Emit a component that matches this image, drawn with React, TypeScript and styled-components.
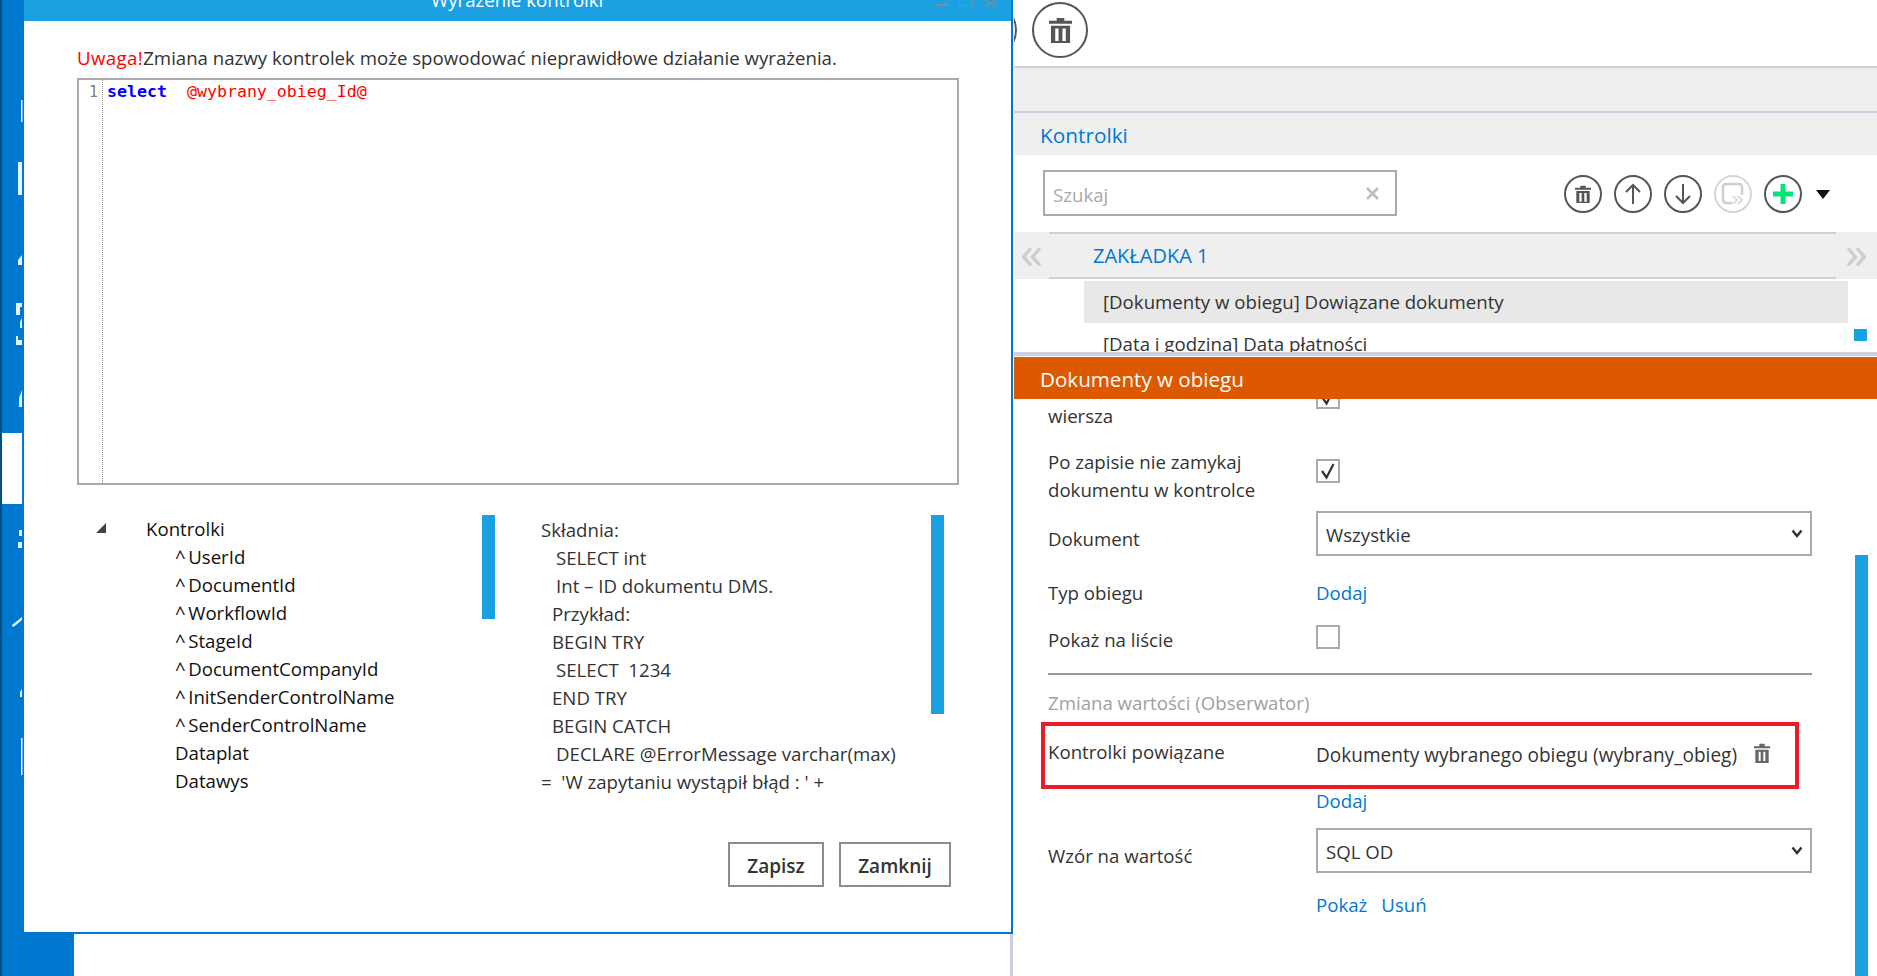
import React from "react";
import styled, { createGlobalStyle } from "styled-components";

const Global = createGlobalStyle`
  html, body { margin: 0; padding: 0; background: #fff; overflow: hidden; }
  * { box-sizing: border-box; }
  body { font-family: "Open Sans", "Noto Sans", sans-serif; font-size: 18.65px; color: #333; }
`;

const Page = styled.div`
  width: 1877px; height: 976px; display: flex; overflow: hidden; background: #fff;
`;
const LeftColumn = styled.div`
  width: 1013px; height: 976px; flex: none; display: flex; flex-direction: column;
  border-left: 2px solid #004f85;
`;
const WorkRow = styled.div`
  display: flex; height: 934px; flex: none;
`;
const Rail = styled.div`
  width: 22px; flex: none; background: #0078cf; display: flex; flex-direction: column;
`;
const RailGlyphs = styled.svg`
  display: block; width: 22px; flex: none;
`;
const RailSelected = styled.div`
  width: 20px; height: 71px; flex: none; background: #fff;
`;
const BottomRow = styled.div`
  display: flex; flex: 1; border-right: 3px solid #cdcfdc;
`;
const BottomBlue = styled.div`
  width: 72px; background: #0078cf;
`;
const Modal = styled.section`
  flex: 1; display: flex; flex-direction: column; background: #fff;
  border-right: 2px solid #0078cf; border-bottom: 2px solid #0078cf;
`;
const TitleBar = styled.header`
  height: 21px; flex: none; background: #1ba1e2; overflow: hidden; display: flex;
  justify-content: space-between; align-items: flex-start; color: #fff;
`;
const Title = styled.div`
  margin: -12px 0 0 407px; line-height: 24px;
`;
const WindowControls = styled.svg`
  width: 78px; height: 10px; display: block; flex: none;
`;
const ModalBody = styled.div`
  padding: 23px 0 0 53px; display: flex; flex-direction: column; flex: 1;
`;
const Warning = styled.div`
  height: 28px; line-height: 28px; margin-bottom: 6px; color: #333;
`;
const Red = styled.span`color: #f00; letter-spacing: 0.4px;`;
const Editor = styled.div`
  width: 882px; height: 407px; flex: none; border: 2px solid #a9a9b0; display: flex; padding-top: 2px;
  font-family: "DejaVu Sans Mono", "Liberation Mono", monospace; font-size: 16.6px; line-height: 20px;
`;
const Gutter = styled.div`
  width: 24px; flex: none; text-align: right; color: #808080; padding-right: 4px; margin-top: -2px; padding-top: 2px;
  border-right: 1px dotted #999; font-weight: 400; font-size: 15px;
`;
const Code = styled.div`
  padding-left: 4px; white-space: pre;
`;
const Keyword = styled.span`color: #00f; font-weight: 700;`;
const Variable = styled.span`color: #f00;`;
const Panes = styled.div`
  display: flex; margin-top: 30px; height: 300px; flex: none;
`;
const TreePane = styled.div`
  width: 418px; flex: none; display: flex; padding-left: 19px;
`;
const TreeArrow = styled.svg`
  width: 10px; height: 10px; flex: none; margin-top: 8px; display: block;
`;
const TreeList = styled.div`
  margin-left: 40px; color: #111; display: flex; flex-direction: column;
`;
const TreeRow = styled.div<{ $depth: number }>`
  height: 28px; line-height: 28px; margin-left: ${(p) => p.$depth * 29}px; white-space: pre;
`;
const Caret = styled.span`
  letter-spacing: 2.5px;
`;
const Scroll = styled.div<{ $h: number; $top?: number }>`
  width: 13px; height: ${(p) => p.$h}px; margin-top: ${(p) => p.$top ?? 0}px; flex: none; background: #1ba1e2;
`;
const TreeScroll = styled(Scroll)`
  margin-left: auto;
`;
const SyntaxPane = styled.div`
  display: flex; margin-left: 46px; width: 403px; flex: none; justify-content: space-between;
`;
const SyntaxList = styled.div`
  display: flex; flex-direction: column; padding-top: 1px; color: #333;
`;
const SyntaxRow = styled.div<{ $indent: number }>`
  height: 28px; line-height: 28px; margin-left: ${(p) => p.$indent}px; white-space: pre;
`;
const Actions = styled.div`
  display: flex; gap: 15px; margin-left: 651px; margin-top: 27px;
`;
const ActionButton = styled.button<{ $w: number }>`
  width: ${(p) => p.$w}px; height: 45px; background: #fff; border: 2px solid #8c8c8c; padding: 2px 0 0;
  font-family: inherit; font-size: 19px; font-weight: 600; color: #333;
`;

const RightPanel = styled.div`
  width: 864px; flex: none; height: 976px; display: flex; flex-direction: column; overflow: hidden;
  border-left: 1px solid #fff;
`;
const TopTools = styled.div`
  height: 66px; flex: none; display: flex; padding-top: 2px; gap: 15px;
`;
const RoundTool = styled.div<{ $clipped?: boolean }>`
  width: 56px; height: 56px; border-radius: 50%; border: 2px solid #555; flex: none; display: flex;
  align-items: center; justify-content: center; margin-left: ${(p) => (p.$clipped ? "-53px" : "0")};
`;
const GrayBand = styled.div`
  height: 45px; flex: none; background: #efefef; border-top: 2px solid #cdcfdc;
`;
const HeaderBand = styled.div`
  height: 44px; flex: none; background: #efefef; border-top: 2px solid #cdcfdc; padding-left: 26px;
  color: #0078cf; font-size: 20.8px; line-height: 45px; font-weight: 500;
`;
const Toolbar = styled.div`
  height: 77px; flex: none; padding: 15px 0 0 29px; display: flex; align-items: flex-start;
`;
const SearchBox = styled.div`
  width: 354px; height: 46px; border: 2px solid #a9a9b0; display: flex; align-items: center; padding: 0 16px 0 8px; flex: none;
`;
const SearchInput = styled.input`
  flex: 1; min-width: 0; border: 0; outline: 0; padding: 3px 0 0; font: inherit;
  &::placeholder { color: #a8a8a8; opacity: 1; }
`;
const IconGroup = styled.div`
  display: flex; gap: 12px; margin-left: 167px; margin-top: 5px; align-items: center;
`;
const IconButton = styled.button<{ $disabled?: boolean }>`
  width: 38px; height: 38px; border-radius: 50%; padding: 0; background: #fff; flex: none;
  border: 2px solid ${(p) => (p.$disabled ? "#d6d6d6" : "#555")};
  display: flex; align-items: center; justify-content: center;
`;
const MenuCaret = styled.svg`
  width: 14px; height: 9px; margin-left: 2px; display: block; flex: none;
`;
const TabsBand = styled.div`
  height: 47px; flex: none; background: #efefef; display: flex;
`;
const TabArrow = styled.div<{ $w: number }>`
  width: ${(p) => p.$w}px; flex: none; color: #cdcdcd; font-size: 46px; line-height: 38px; text-align: center; font-weight: 400;
`;
const TabTitle = styled.div`
  width: 787px; flex: none; border-top: 2px solid #cdcfdc; border-bottom: 2px solid #cdcfdc;
  padding-left: 44px; line-height: 44px; color: #0078cf; font-size: 20px; font-weight: 500;
`;
const ListArea = styled.div`
  height: 73px; flex: none; overflow: hidden; display: flex; padding: 2px 0 0 70px;
`;
const ListItems = styled.div`
  width: 764px; flex: none;
`;
const ListItem = styled.div<{ $selected?: boolean }>`
  height: 42px; line-height: 42px; padding-left: 19px; background: ${(p) => (p.$selected ? "#e8e8e8" : "transparent")};
`;
const MiniScroll = styled(Scroll)`
  margin-left: 6px;
`;
const SectionHead = styled.div`
  height: 47px; flex: none; border-top: 4px solid #cdcfdc; padding-top: 1px; background: #fff;
`;
const SectionTitle = styled.div`
  height: 42px; background: #dd5900; color: #fff; padding-left: 26px; line-height: 44px; font-size: 20.6px; font-weight: 500;
`;
const FormArea = styled.div`
  flex: 1; min-height: 0; overflow: hidden; display: flex;
`;
const Form = styled.div`
  width: 841px; flex: none; padding-left: 34px; display: flex; flex-direction: column;
`;
const Row = styled.div<{ $mt?: number; $h?: number }>`
  display: grid; grid-template-columns: 268px 496px; flex: none; margin-top: ${(p) => p.$mt ?? 0}px;
  ${(p) => (p.$h ? `height: ${p.$h}px;` : "")}
`;
const Label = styled.div<{ $mt?: number }>`
  line-height: 28px; margin-top: ${(p) => p.$mt ?? 0}px; color: #333; white-space: nowrap;
`;
const Check = styled.div<{ $mt?: number }>`
  width: 24px; height: 24px; border: 2px solid #a9a9b0; background: #fff; margin-top: ${(p) => p.$mt ?? 0}px;
  display: flex; align-items: center; justify-content: center;
`;
const SelectWrap = styled.div`
  position: relative; width: 496px; height: 45px;
`;
const SelectBox = styled.select`
  appearance: none; width: 496px; height: 45px; border: 2px solid #a9a9b0; border-radius: 0; background: #fff; color: #333;
  font: inherit; padding: 2px 0 0 8px; outline: 0; display: block;
`;
const SelectChevron = styled.svg`
  position: absolute; right: 9px; top: 18px; width: 12px; height: 9px; pointer-events: none;
`;
const LinkText = styled.a`
  color: #0078cf; line-height: 28px; margin-right: 14px; display: inline-block;
`;
const Divider = styled.div`
  width: 764px; height: 2px; background: #999; margin-top: 19px; flex: none;
`;
const SectionLabel = styled.div`
  color: #a0a0a0; line-height: 28px; margin-top: 14px; flex: none;
`;
const Highlight = styled.div`
  width: 758px; height: 67px; flex: none; margin: 5px 0 0 -7px; border: 4px solid #ed1c24; padding-left: 3px;
  display: grid; grid-template-columns: 268px auto 1fr;
`;
const Value = styled.div`
  margin-top: 15px; line-height: 28px; white-space: nowrap; font-size: 19.05px;
`;
const ValueTrash = styled.svg`
  margin: 17px 0 0 17px; width: 16px; height: 20px; display: block;
`;
const FormScroll = styled(Scroll)`
  margin-top: 156px; height: 430px;
`;

const railTop = "M19 100h1.500v22H19zM16 162h4v33h-4zM16 260l4-5v10h-4zM14 303h6v4h-2v8h-4zM18 322l2-4v10h-2zM14 336h2v4h4v5h-6zM17 398l3-8v17h-3z";
const railBottom = "M17 26h3v6h-3zM16 38h4v6h-4zM10 121l10-8v3l-6 5-3 2zM18 188l2-3v8h-2zM19 234h1.500v37H19z";

const TrashIcon = ({ s, color = "#555" }: { s: number; color?: string }) => (
  <svg width={s} height={s * 1.17} viewBox="0 0 24 28">
    <path fill={color} d="M8 1h8v3h8v3H0V4h8zM2 9h20v19H2zM6.500 12v13h3.500V12zM14 12v13h3.500V12z" fillRule="evenodd" />
  </svg>
);

const Checkmark = () => (
  <svg width="16" height="18" viewBox="0 0 16 18"><path d="M2 9l4.500 6.500L13.500 2" stroke="#333" strokeWidth="2.200" fill="none" /></svg>
);

const Chevron = () => (
  <SelectChevron viewBox="0 0 12 9"><path d="M1.500 1.500L6 7l4.500-5.500" stroke="#333" strokeWidth="2.400" fill="none" /></SelectChevron>
);

const treeItems = ["UserId", "DocumentId", "WorkflowId", "StageId", "DocumentCompanyId", "InitSenderControlName", "SenderControlName"];
const syntax: [string, number][] = [
  ["Składnia:", 0], ["SELECT int", 15], ["Int – ID dokumentu DMS.", 15], ["Przykład:", 11], ["BEGIN TRY", 11],
  ["SELECT  1234", 15], ["END TRY", 11], ["BEGIN CATCH", 11], ["DECLARE @ErrorMessage varchar(max)", 15], ["=  'W zapytaniu wystąpił błąd : ' +", 0],
];

export default function App() {
  return (
    <Page>
      <Global />
      <LeftColumn>
        <WorkRow>
          <Rail>
            <RailGlyphs height="433" viewBox="0 0 22 433"><path fill="#e8f3fb" d={railTop} /></RailGlyphs>
            <RailSelected />
            <RailGlyphs height="430" viewBox="0 0 22 430"><path fill="#e8f3fb" d={railBottom} /></RailGlyphs>
          </Rail>
          <Modal>
            <TitleBar>
              <Title>Wyrażenie kontrolki</Title>
              <WindowControls viewBox="0 0 78 10">
                <path d="M3 4h12v2H3z" fill="#7f8c96" />
                <path d="M26.500 0v5.500h13V0" stroke="#7f8c96" fill="none" />
                <path d="M52 0l11 6.500M63 0L52 6.500" stroke="#7f8c96" strokeWidth="1.500" />
              </WindowControls>
            </TitleBar>
            <ModalBody>
              <Warning><Red>Uwaga!</Red>Zmiana nazwy kontrolek może spowodować nieprawidłowe działanie wyrażenia.</Warning>
              <Editor>
                <Gutter>1</Gutter>
                <Code><Keyword>select</Keyword>{"  "}<Variable>@wybrany_obieg_Id@</Variable></Code>
              </Editor>
              <Panes>
                <TreePane>
                  <TreeArrow viewBox="0 0 10 10"><path d="M10 0v10H0z" fill="#444" /></TreeArrow>
                  <TreeList>
                    <TreeRow $depth={0}>Kontrolki</TreeRow>
                    {treeItems.map((t) => <TreeRow key={t} $depth={1}><Caret>^</Caret>{t}</TreeRow>)}
                    <TreeRow $depth={1}>Dataplat</TreeRow>
                    <TreeRow $depth={1}>Datawys</TreeRow>
                  </TreeList>
                  <TreeScroll $h={104} />
                </TreePane>
                <SyntaxPane>
                  <SyntaxList>
                    {syntax.map(([t, i]) => <SyntaxRow key={t} $indent={i}>{t}</SyntaxRow>)}
                  </SyntaxList>
                  <Scroll $h={199} />
                </SyntaxPane>
              </Panes>
              <Actions>
                <ActionButton $w={96}>Zapisz</ActionButton>
                <ActionButton $w={112}>Zamknij</ActionButton>
              </Actions>
            </ModalBody>
          </Modal>
        </WorkRow>
        <BottomRow><BottomBlue /></BottomRow>
      </LeftColumn>
      <RightPanel>
        <TopTools>
          <RoundTool $clipped />
          <RoundTool><TrashIcon s={23} /></RoundTool>
        </TopTools>
        <GrayBand />
        <HeaderBand>Kontrolki</HeaderBand>
        <Toolbar>
          <SearchBox>
            <SearchInput placeholder="Szukaj" />
            <svg width="13" height="13" viewBox="0 0 13 13"><path d="M1 1l11 11M12 1L1 12" stroke="#bdbdbd" strokeWidth="2.500" /></svg>
          </SearchBox>
          <IconGroup>
            <IconButton><TrashIcon s={16} /></IconButton>
            <IconButton>
              <svg width="18" height="22" viewBox="0 0 18 22"><path d="M9 21V2M2 9l7-7 7 7" stroke="#555" strokeWidth="2" fill="none" /></svg>
            </IconButton>
            <IconButton>
              <svg width="18" height="22" viewBox="0 0 18 22"><path d="M9 1v19M2 13l7 7 7-7" stroke="#555" strokeWidth="2" fill="none" /></svg>
            </IconButton>
            <IconButton $disabled>
              <svg width="28" height="26" viewBox="0 0 28 26"><path d="M13 22H7a3 3 0 0 1-3-3V6a3 3 0 0 1 3-3h13a3 3 0 0 1 3 3v8" stroke="#cfcfcf" strokeWidth="2.500" fill="none" /><path d="M14 15l4 4-4 4M19 15l4 4-4 4" stroke="#d0d0d0" strokeWidth="1.500" fill="none" /></svg>
            </IconButton>
            <IconButton>
              <svg width="22" height="22" viewBox="0 0 22 22"><path d="M8.500 1h5v7.500H21v5h-7.500V21h-5v-7.500H1v-5h7.500z" fill="#00e676" /></svg>
            </IconButton>
            <MenuCaret viewBox="0 0 14 9"><path d="M0 0h14L7 9z" fill="#111" /></MenuCaret>
          </IconGroup>
        </Toolbar>
        <TabsBand>
          <TabArrow $w={35}>«</TabArrow>
          <TabTitle>ZAKŁADKA 1</TabTitle>
          <TabArrow $w={41}>»</TabArrow>
        </TabsBand>
        <ListArea>
          <ListItems>
            <ListItem $selected>[Dokumenty w obiegu] Dowiązane dokumenty</ListItem>
            <ListItem>[Data i godzina] Data płatności</ListItem>
          </ListItems>
          <MiniScroll $h={12} $top={48} />
        </ListArea>
        <SectionHead><SectionTitle>Dokumenty w obiegu</SectionTitle></SectionHead>
        <FormArea>
          <Form>
            <Row $h={37}>
              <Label $mt={3}>wiersza</Label>
              <Check $mt={-14}><Checkmark /></Check>
            </Row>
            <Row $mt={12}>
              <Label>Po zapisie nie zamykaj<br />dokumentu w kontrolce</Label>
              <Check $mt={11}><Checkmark /></Check>
            </Row>
            <Row $mt={7} $h={45}>
              <Label $mt={14}>Dokument</Label>
              <SelectWrap>
                <SelectBox defaultValue="Wszystkie"><option>Wszystkie</option></SelectBox>
                <Chevron />
              </SelectWrap>
            </Row>
            <Row $mt={23} $h={28}>
              <Label>Typ obiegu</Label>
              <div><LinkText>Dodaj</LinkText></div>
            </Row>
            <Row $mt={19} $h={28}>
              <Label>Pokaż na liście</Label>
              <Check $mt={-1} />
            </Row>
            <Divider />
            <SectionLabel>Zmiana wartości (Obserwator)</SectionLabel>
            <Highlight>
              <Label $mt={12}>Kontrolki powiązane</Label>
              <Value>Dokumenty wybranego obiegu (wybrany_obieg)</Value>
              <ValueTrash viewBox="0 0 24 30"><path fill="#666" fillRule="evenodd" d="M8 1h8v4h8v3H0V5h8zM2 10h20v20H2zM7 13v14h3V13zM14 13v14h3V13z" /></ValueTrash>
            </Highlight>
            <Row $mt={-2} $h={28}>
              <span />
              <div><LinkText>Dodaj</LinkText></div>
            </Row>
            <Row $mt={13} $h={45}>
              <Label $mt={14}>Wzór na wartość</Label>
              <SelectWrap>
                <SelectBox defaultValue="SQL OD"><option>SQL OD</option></SelectBox>
                <Chevron />
              </SelectWrap>
            </Row>
            <Row $mt={18} $h={28}>
              <span />
              <div><LinkText>Pokaż</LinkText><LinkText>Usuń</LinkText></div>
            </Row>
          </Form>
          <FormScroll $h={430} />
        </FormArea>
      </RightPanel>
    </Page>
  );
}
